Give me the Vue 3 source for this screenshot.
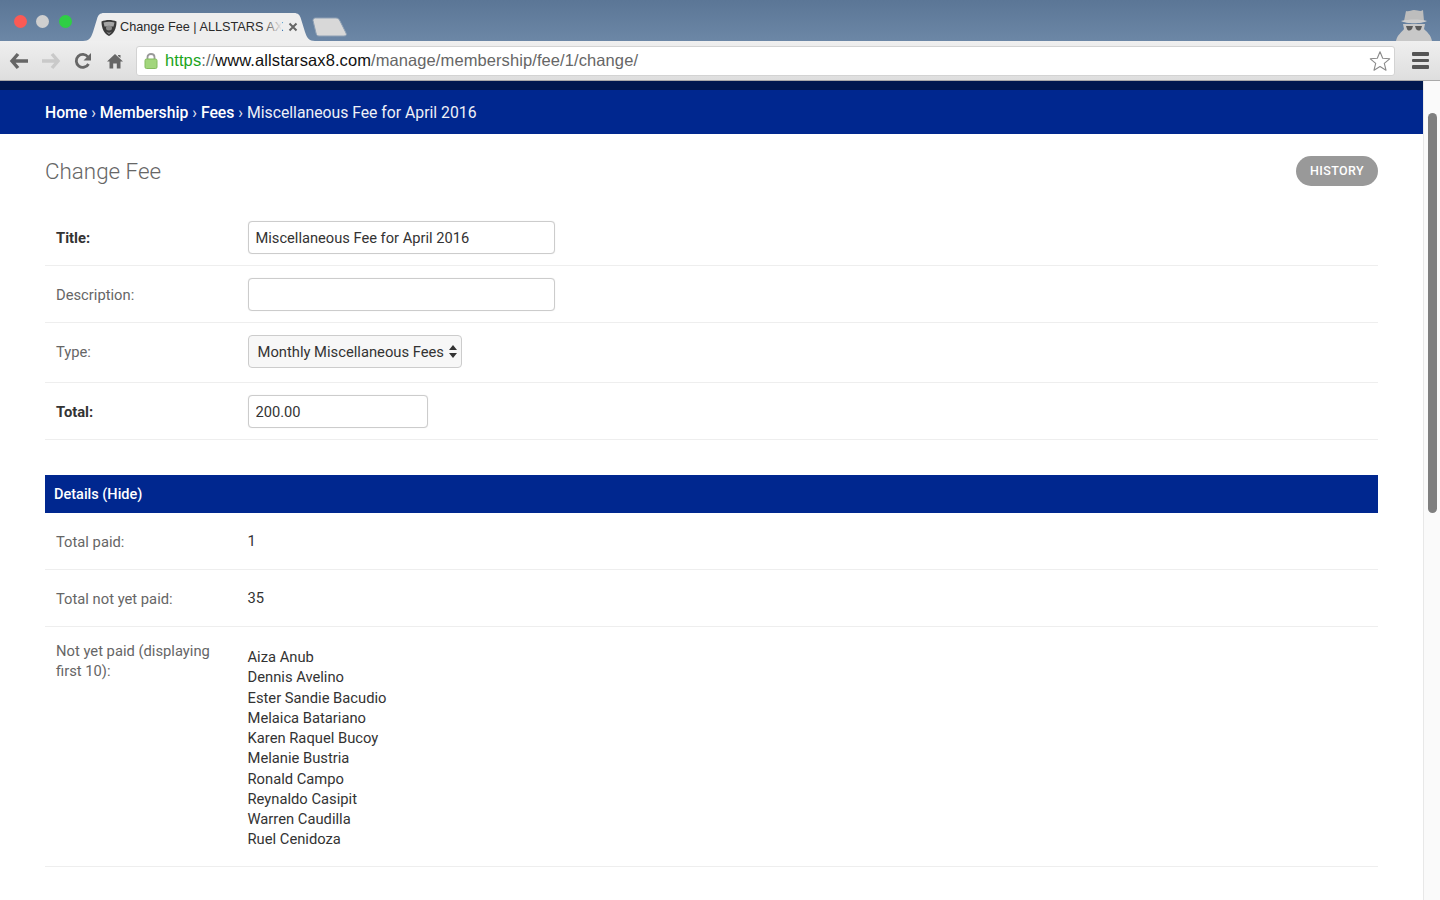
<script setup>
const names = ['Aiza Anub','Dennis Avelino','Ester Sandie Bacudio','Melaica Batariano','Karen Raquel Bucoy','Melanie Bustria','Ronald Campo','Reynaldo Casipit','Warren Caudilla','Ruel Cenidoza']
</script>

<template>
  <div class="window">
    <header class="tabstrip">
      <div class="lights">
        <span class="light red"></span>
        <span class="light grey"></span>
        <span class="light green"></span>
      </div>
      <div class="tab">
        <svg class="tab-shape" width="232" height="28" viewBox="0 0 232 28"><path d="M0 28C6 28 8 25 10 19L14 6C15 2 17 0 21 0H211C215 0 217 2 218 6L222 19C224 25 226 28 232 28Z" fill="#eeeeee"/></svg>
        <svg class="favicon" width="16" height="17" viewBox="0 0 16 17"><path d="M.5 2.500C5 .5 11 .5 15.500 2.500C15.500 9.500 13 14.500 8 17C3 14.500 .5 9.500 .5 2.500Z" fill="#3a3a3a"/><path d="M2.500 3.500C6 2.500 10 2.500 13.500 3.500L12.500 7.500H3.500Z" fill="#a5a5a5"/><ellipse cx="8" cy="9" rx="3" ry="2.500" fill="#8a8a8a"/><path d="M5 12.500C7 14 9 14 11 12.500L8 15.500Z" fill="#888"/></svg>
        <span class="tab-title">Change Fee | ALLSTARS AX</span>
        <span class="tab-fade"></span>
        <svg class="tab-close" width="10" height="10" viewBox="0 0 10 10"><path d="M1.500 1.500L8.500 8.500M8.500 1.500L1.500 8.500" stroke="#666" stroke-width="2"/></svg>
      </div>
      <svg class="newtab" width="36" height="20" viewBox="0 0 36 20"><path d="M1 3.500C1 2 2 1 3.500 1H24C26 1 27 2 28 4L34 16C35 18 34 19 32 19H7C5 19 4.500 18 4 16Z" fill="#d8d8d8" stroke="#8ea0b4"/></svg>
      <svg class="spy" width="40" height="34" viewBox="0 0 40 34">
        <path d="M10 14L12 4C15 5 17 3 20 3C24 3 26 5 29 3L30 14Z" fill="#bdbdbd"/>
        <path d="M7 14C15 12 26 12 33 14C28 17 12 17 7 14Z" fill="#cdcdcd"/>
        <path d="M9 17H31L30 22C33 25 37 28 38 34H2C3 28 8 25 10 22Z" fill="#c8c8c8"/>
        <path d="M12 19H19L18 22C16 24 14 24 13 22ZM21 19H28L27 22C26 24 24 24 22 22Z" fill="#5a5a5a"/>
      </svg>
    </header>

    <nav class="toolbar">
      <button class="tool" aria-label="Back"><svg width="20" height="18" viewBox="0 0 20 18"><path d="M9 2L3 9L9 16M3.500 9H19" fill="none" stroke="#666" stroke-width="3.400"/></svg></button>
      <button class="tool" aria-label="Forward"><svg width="20" height="18" viewBox="0 0 20 18"><path d="M11 2L17 9L11 16M16.500 9H1" fill="none" stroke="#c9c9c9" stroke-width="3.400"/></svg></button>
      <button class="tool" aria-label="Reload"><svg width="18" height="18" viewBox="0 0 18 18"><path d="M14.500 12A6.500 6.500 0 1 1 14 5" fill="none" stroke="#666" stroke-width="2.800"/><path d="M17 1V8.500H9.500Z" fill="#666"/></svg></button>
      <button class="tool" aria-label="Home"><svg width="16" height="16" viewBox="0 0 16 16"><path d="M8 1L16 8.500H13.500V15.500H9.800V10.500H6.200V15.500H2.500V8.500H0Z" fill="#666"/><path d="M11 2H13.500V5L11 3Z" fill="#666"/></svg></button>
      <div class="omnibox">
        <svg class="lock" width="14" height="17" viewBox="0 0 14 17"><path d="M3.500 8V5C3.500 1 10.500 1 10.500 5V8" fill="none" stroke="#999" stroke-width="1.800"/><rect x="1" y="7" width="12" height="9.500" rx="1.500" fill="#a2d67c" stroke="#84bb5e"/></svg>
        <div class="url"><span class="scheme">https</span><span class="dim">://</span><span class="host">www.allstarsax8.com</span><span class="dim">/manage/membership/fee/1/change/</span></div>
        <svg class="star" width="22" height="22" viewBox="0 0 22 22"><path d="M11 1.800L13.700 8.300L20.700 8.800L15.300 13.400L17 20.200L11 16.500L5 20.200L6.700 13.400L1.300 8.800L8.300 8.300Z" fill="#fff" stroke="#8a8a8a" stroke-width="1.100" stroke-linejoin="round"/></svg>
      </div>
      <button class="menu" aria-label="Menu"><span></span><span></span><span></span></button>
    </nav>

    <div class="viewport">
      <main class="page">
        <div class="topstrip"></div>
        <div class="breadcrumbs">
          <a>Home</a> › <a>Membership</a> › <a>Fees</a> › <a>Miscellaneous Fee for April 2016</a>
        </div>
        <section class="content">
          <div class="title-row">
            <h1>Change Fee</h1>
            <a class="history">HISTORY</a>
          </div>
          <form>
            <div class="row r1">
              <label class="required">Title:</label>
              <input class="field wide" type="text" value="Miscellaneous Fee for April 2016" />
            </div>
            <div class="row r1">
              <label>Description:</label>
              <input class="field wide" type="text" value="" />
            </div>
            <div class="row r2">
              <label>Type:</label>
              <div class="select">
                <span>Monthly Miscellaneous Fees</span>
                <svg width="8" height="13" viewBox="0 0 8 13"><path d="M4 0L8 5H0ZM4 13L0 8H8Z" fill="#333"/></svg>
              </div>
            </div>
            <div class="row r1">
              <label class="required">Total:</label>
              <input class="field narrow" type="text" value="200.00" />
            </div>

            <h2 class="section-bar">Details (Hide)</h2>

            <div class="row info">
              <label>Total paid:</label>
              <div class="value">1</div>
            </div>
            <div class="row info">
              <label>Total not yet paid:</label>
              <div class="value">35</div>
            </div>
            <div class="row info list">
              <label>Not yet paid (displaying first 10):</label>
              <div class="value">
                <div v-for="n in names" :key="n">{{ n }}</div>
              </div>
            </div>
          </form>
        </section>
      </main>
      <aside class="scrollbar"><div class="thumb"></div></aside>
    </div>
  </div>
</template>

<style>
html, body { margin: 0; overflow: hidden; background: #fff; }
</style>

<style scoped>
.window { width: 1440px; height: 900px; overflow: hidden; display: flex; flex-direction: column; font-family: Roboto, "Liberation Sans", sans-serif; color: #333; }

.tabstrip { height: 41px; flex: none; position: relative; background: linear-gradient(#5b7696, #6c87a6); display: flex; align-items: flex-start; }
.lights { display: flex; gap: 9.500px; padding: 14.500px 0 0 13.500px; }
.light { width: 13px; height: 13px; border-radius: 50%; }
.red { background: #fb5a55; }
.grey { background: #cfcfcf; }
.green { background: #2fce45; }
.tab { position: absolute; left: 83px; top: 13px; width: 232px; height: 28px; }
.tab-shape { position: absolute; left: 0; top: 0; }
.favicon { position: absolute; left: 18px; top: 6px; }
.tab-title { position: absolute; left: 37px; top: 6px; white-space: nowrap; font: 12.700px/17px "Liberation Sans", Arial, sans-serif; color: #2a2a2a; }
.tab-fade { position: absolute; left: 179px; top: 4px; width: 20px; height: 20px; background: linear-gradient(90deg, rgba(238,238,238,0), #eee); }
.tab-close { position: absolute; left: 205px; top: 9px; }
.newtab { position: absolute; left: 312px; top: 17px; }
.spy { position: absolute; left: 1394px; top: 7px; }

.toolbar { height: 40px; flex: none; box-sizing: border-box; display: flex; align-items: center; padding: 0 0 0 3px; background: linear-gradient(#efefef, #dedede); border-bottom: 1px solid #a9a9a9; }
.tool { width: 32px; height: 32px; padding: 0; border: 0; background: none; display: flex; align-items: center; justify-content: center; }
.omnibox { margin-left: 5px; width: 1259px; height: 30px; box-sizing: border-box; display: flex; align-items: center; background: #fff; border: 1px solid #d3d3d3; border-radius: 3px; padding: 0 3px 0 7px; }
.lock { flex: none; }
.url { flex: 1; margin: 0 0 1px 7px; font: 16.500px/22px "Liberation Sans", Arial, sans-serif; letter-spacing: 0.090px; white-space: nowrap; }
.scheme { color: #1ca51c; }
.dim { color: #666; }
.host { color: #111; }
.star { flex: none; }
.menu { width: 17px; padding: 0; margin-left: 17px; border: 0; background: none; display: flex; flex-direction: column; gap: 3px; }
.menu span { height: 3.500px; border-radius: 1px; background: #555; }

.viewport { flex: 1; min-height: 0; display: flex; }
.page { flex: 1; min-width: 0; }
.topstrip { height: 9px; background: #00184f; }
.breadcrumbs { height: 44px; box-sizing: border-box; padding: 1px 45px 0; line-height: 44px; white-space: nowrap; background: #00278f; color: #e6e9f3; font-size: 15.750px; }
.breadcrumbs a { color: #fff; font-weight: 500; }
.breadcrumbs a:last-child { color: #eef0f7; font-weight: 400; }

.content { padding: 0 45px; }
.title-row { height: 75px; display: flex; justify-content: space-between; align-items: flex-start; }
h1 { margin: 23px 0 0; font-size: 22.400px; line-height: 29px; font-weight: 300; color: #666; }
.history { margin-top: 22px; height: 30px; padding: 0 14px; border-radius: 15px; background: #999; color: #fff; font-size: 12.500px; font-weight: 500; line-height: 30px; letter-spacing: 0.400px; }

.row { display: flex; align-items: center; border-bottom: 1px solid #eee; padding: 0 11px; font-size: 14.750px; }
.row label { width: 191.500px; box-sizing: border-box; padding-right: 15px; flex: none; color: #666; line-height: 20px; }
.row label.required { color: #333; font-weight: 700; }
.r1 { height: 57px; padding-top: 12px; box-sizing: border-box; align-items: flex-start; }
.r1 label { padding-top: 7px; }
.r2 { height: 60px; box-sizing: border-box; padding-top: 12px; align-items: flex-start; }
.r2 label { padding-top: 7px; }
.field { box-sizing: border-box; height: 33px; padding: 0 7px; border: 1px solid #ccc; border-radius: 4px; font: 400 14.660px Roboto, "Liberation Sans", sans-serif; color: #333; background: #fff; outline: none; box-shadow: 0 0 1px #ddd; }
.wide { width: 307.500px; }
.narrow { width: 180.500px; }
.select { box-sizing: border-box; width: 214.500px; height: 33px; padding: 0 4px 0 9px; display: flex; justify-content: space-between; align-items: center; border: 1px solid #ccc; border-radius: 4px; background: #f7f7f7; color: #333; white-space: nowrap; }

.section-bar { margin: 35px 0 0; height: 38px; box-sizing: border-box; padding: 0 9px; display: flex; align-items: center; background: #00278f; color: #fff; font-size: 14.500px; font-weight: 500; }

.info { height: 57px; box-sizing: border-box; padding-top: 1px; }
.value { color: #333; line-height: 20.250px; }
.list { height: auto; align-items: flex-start; padding-top: 20px; padding-bottom: 16px; }
.list label { margin-top: -6px; }

.scrollbar { width: 17px; flex: none; box-sizing: border-box; position: relative; background: #fafafa; border-left: 1px solid #e8e8e8; }
.thumb { position: absolute; left: 4px; top: 32px; width: 9px; height: 400px; border-radius: 5px; background: #7f7f7f; }
</style>
